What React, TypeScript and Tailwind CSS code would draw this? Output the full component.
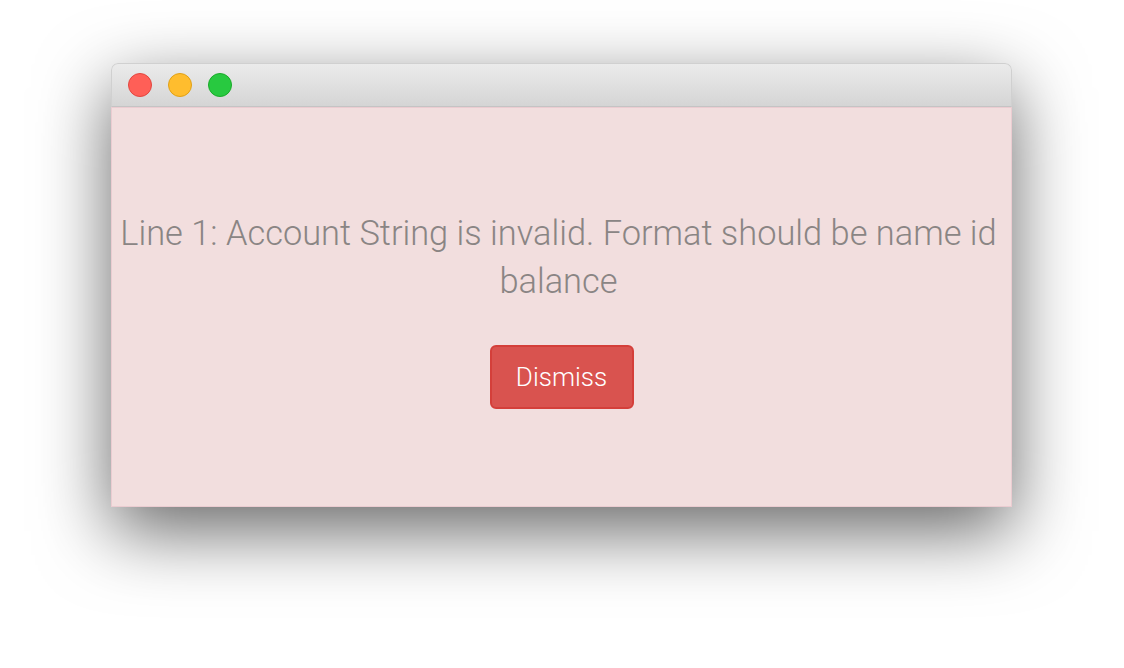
import React from "react";

const TrafficLight = ({ fill, border }: { fill: string; border: string }) => (
  <span className={`block h-[24px] w-[24px] rounded-full border ${fill} ${border}`} />
);

export default function App() {
  return (
    <div className="h-[668px] w-[1124px] bg-white pl-[111px] pt-[63px]" style={{ fontFamily: "Roboto, 'Liberation Sans', sans-serif" }}>
      <div className="flex h-[444px] w-[901px] flex-col rounded-t-[7px] shadow-[0_24px_72px_rgba(0,0,0,0.6)]">
        {/* title bar */}
        <div className="flex h-[44px] items-center gap-[16px] rounded-t-[7px] border border-b-[#c4c4c4] border-[#d0d0d0] bg-gradient-to-b from-[#ebebeb] to-[#d5d5d5] pl-[16px]">
          <TrafficLight fill="bg-[#ff5f57]" border="border-[#e2463f]" />
          <TrafficLight fill="bg-[#ffbd2e]" border="border-[#e1a116]" />
          <TrafficLight fill="bg-[#28c940]" border="border-[#1aab29]" />
        </div>
        {/* alert body */}
        <div className="flex flex-1 flex-col items-center justify-center border border-[#ebccd1] bg-[#f2dede] pt-[4px]">
          <p className="pr-[6px] text-center text-[34.4px] font-light leading-[48px] text-[#8a8584]">
            Line 1: Account String is invalid. Format should be name id balance
          </p>
          <button
            type="button"
            className="mt-[40px] h-[64px] w-[144px] rounded-[6px] border-2 border-[#d43f3a] bg-[#d9534f] text-[26px] font-light text-white"
          >
            Dismiss
          </button>
        </div>
      </div>
    </div>
  );
}
